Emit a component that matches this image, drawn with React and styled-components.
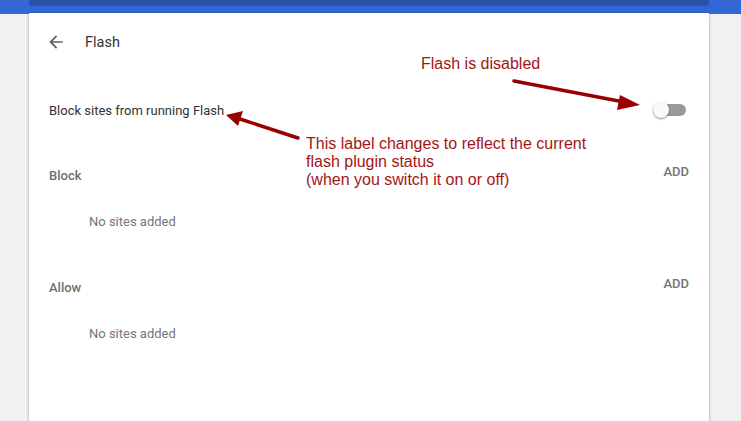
import styled, { createGlobalStyle } from "styled-components"

const GlobalStyle = createGlobalStyle`
  html, body {
    margin: 0;
    padding: 0;
    background: #f1f1f1;
    font-family: Roboto, "Liberation Sans", sans-serif;
  }
  body {
    height: 421px;
    overflow: hidden;
  }
`

const Page = styled.div`
  position: relative;
  width: 741px;
  height: 421px;
  overflow: hidden;
  background: #f1f1f1;
`

const TopBand = styled.div`
  height: 14px;
  background: #3367d6;
  padding: 0 32px 0 29px;
`

const TopBar = styled.div`
  height: 6px;
  background: #2a52aa;
  border-radius: 0 0 2px 2px;
`

const Card = styled.div`
  margin: -1px 32px 0 29px;
  height: 420px;
  background: #fff;
  box-shadow: 0 0 3px rgba(0, 0, 0, 0.25), 0 2px 3px rgba(0, 0, 0, 0.12);
`

const Header = styled.div`
  height: 58px;
  display: flex;
  align-items: center;
  gap: 19px;
  padding-left: 17px;
`

const Title = styled.div`
  font-size: 14.5px;
  color: #333;
`

const ToggleRow = styled.div`
  margin-top: 15px;
  height: 48px;
  display: flex;
  align-items: center;
  justify-content: space-between;
  padding: 0 23px 0 20px;
  font-size: 13px;
  color: #333;
`

const Toggle = styled.div`
  position: relative;
  width: 33px;
  height: 16px;
  display: flex;
  align-items: center;
`

const Track = styled.div`
  width: 100%;
  height: 12px;
  border-radius: 6px;
  background: #999;
`

const Knob = styled.div`
  position: absolute;
  left: 0;
  top: 0;
  width: 16px;
  height: 16px;
  border-radius: 50%;
  background: #fafafa;
  box-shadow: 0 1px 2px rgba(0, 0, 0, 0.45);
`

const Section = styled.div`
  padding-top: 20px;
`

const SectionHeader = styled.div`
  height: 42px;
  display: flex;
  align-items: center;
  justify-content: space-between;
  padding: 0 20px;
`

const SectionLabel = styled.div`
  font-size: 13px;
  font-weight: 500;
  color: #6f6f6f;
`

const AddButton = styled.div`
  font-size: 13px;
  font-weight: 500;
  color: #757575;
  margin-bottom: 7px;
`

const Empty = styled.div`
  height: 50px;
  display: flex;
  align-items: center;
  padding-left: 60px;
  font-size: 13px;
  color: #757575;
`

const Note = styled.div`
  position: absolute;
  left: ${(p) => p.$x}px;
  top: ${(p) => p.$y}px;
  font-family: "Liberation Sans", Arial, sans-serif;
  font-size: 16px;
  line-height: 18px;
  color: #a31515;
  white-space: nowrap;
`

const Arrows = styled.svg`
  position: absolute;
  left: 0;
  top: 0;
  pointer-events: none;
`

function BackIcon() {
    return (
        <svg width="20" height="20" viewBox="0 0 24 24" fill="#5f5f5f">
            <path d="M20 11H7.83l5.59-5.59L12 4l-8 8 8 8 1.41-1.41L7.83 13H20v-2z" />
        </svg>
    )
}

function SiteList({ label }) {
    return (
        <Section>
            <SectionHeader>
                <SectionLabel>{label}</SectionLabel>
                <AddButton>ADD</AddButton>
            </SectionHeader>
            <Empty>No sites added</Empty>
        </Section>
    )
}

function App() {
    return (
        <Page>
            <GlobalStyle />
            <TopBand>
                <TopBar />
            </TopBand>
            <Card>
                <Header>
                    <BackIcon />
                    <Title>Flash</Title>
                </Header>
                <ToggleRow>
                    Block sites from running Flash
                    <Toggle>
                        <Track />
                        <Knob />
                    </Toggle>
                </ToggleRow>
                <SiteList label="Block" />
                <SiteList label="Allow" />
            </Card>

            <Note $x={421} $y={55}>Flash is disabled</Note>
            <Note $x={306} $y={135}>
                This label changes to reflect the current
                <br />
                flash plugin status
                <br />
                (when you switch it on or off)
            </Note>
            <Arrows width="741" height="421">
                <line x1="514" y1="81" x2="624" y2="102" stroke="#990000" strokeWidth="3.5" strokeLinecap="round" />
                <polygon points="640,105 620,95 617,110" fill="#990000" />
                <line x1="298" y1="138" x2="240" y2="119" stroke="#990000" strokeWidth="3.5" strokeLinecap="round" />
                <polygon points="226,115 243,111 238,126" fill="#990000" />
            </Arrows>
        </Page>
    )
}

export default App
